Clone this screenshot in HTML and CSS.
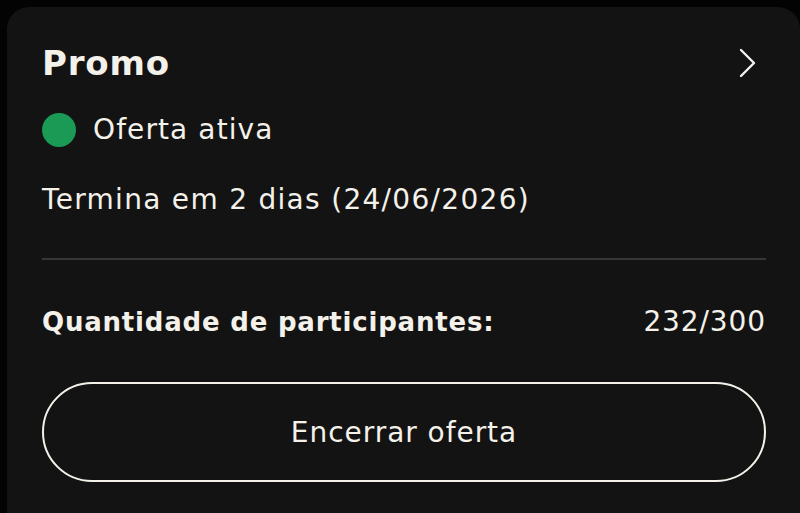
FILE: index.html
```html
<!DOCTYPE html>
<html lang="pt">
<head>
<meta charset="utf-8">
<link rel="stylesheet" href="styles.css">
</head>
<body>
<div class="card">
  <div class="header">
    <span class="title">Promo</span>
    <svg class="chevron" width="20" height="32" viewBox="0 0 20 32"><path d="M3 3 L16 16 L3 29" fill="none" stroke="#f2f2f2" stroke-width="2.4" stroke-linecap="round" stroke-linejoin="round"/></svg>
  </div>
  <div class="status">
    <span class="dot"></span>
    <span class="status-text">Oferta ativa</span>
  </div>
  <div class="ends">Termina em 2 dias (24/06/2026)</div>
  <div class="divider"></div>
  <div class="count">
    <span class="count-label">Quantidade de participantes:</span>
    <span class="count-value">232/300</span>
  </div>
  <button class="end-btn">Encerrar oferta</button>
</div>
</body>
</html>
```
FILE: styles.css
```css
html, body {
  margin: 0;
  padding: 0;
  background: #030303;
  height: 513px;
  overflow: hidden;
}
body {
  font-family: "DejaVu Sans", "Inter", sans-serif;
  color: #f4f1ea;
}
.card {
  margin: 7px 0 0 7px;
  width: 793px;
  height: 540px;
  box-sizing: border-box;
  background: #131313;
  border-radius: 22px;
  padding: 34px 34px 0 35px;
  display: flex;
  flex-direction: column;
}
.header {
  height: 44px;
  display: flex;
  align-items: center;
  justify-content: space-between;
}
.title {
  font-size: 34px;
  font-weight: 700;
  line-height: 44px;
  letter-spacing: 0.8px;
}
.chevron {
  margin-right: 8px;
}
.status {
  margin-top: 28px;
  height: 34px;
  display: flex;
  align-items: center;
  gap: 17px;
}
.dot {
  width: 34px;
  height: 34px;
  border-radius: 50%;
  background: #1b9a56;
}
.status-text {
  font-size: 28px;
  font-weight: 400;
  line-height: 34px;
  letter-spacing: 1.1px;
}
.ends {
  margin-top: 35px;
  font-size: 28px;
  font-weight: 400;
  line-height: 36px;
  letter-spacing: 1.3px;
}
.divider {
  margin-top: 40px;
  height: 2px;
  background: #363636;
}
.count {
  margin-top: 44px;
  height: 36px;
  display: flex;
  align-items: center;
  justify-content: space-between;
}
.count-label {
  font-size: 26px;
  font-weight: 700;
  line-height: 36px;
  letter-spacing: 0.8px;
}
.count-value {
  font-size: 28px;
  font-weight: 400;
  line-height: 36px;
  letter-spacing: 0.9px;
}
.end-btn {
  margin-top: 42px;
  height: 100px;
  border: 2px solid #f4f1ea;
  border-radius: 50px;
  background: transparent;
  color: #f4f1ea;
  font-family: inherit;
  font-size: 28px;
  font-weight: 400;
  letter-spacing: 0.95px;
}
```
